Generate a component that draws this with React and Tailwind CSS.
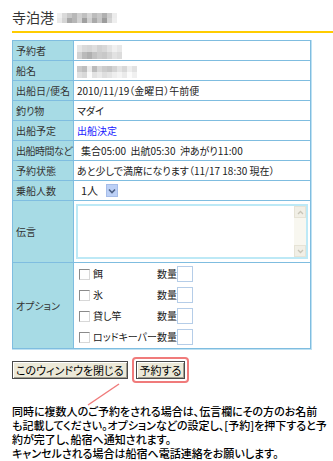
import React from "react";

const F = "font-['Noto_Sans_CJK_JP','Noto_Sans',sans-serif] [font-feature-settings:'palt']";

function Mosaic({ rows, cell }) {
  return (
    <div className="inline-flex flex-col blur-[0.6px]">
      {rows.map((r, i) => (
        <div key={i} className="flex">
          {r.map((c, j) => (
            <div key={j} className={`${cell} ${c}`} />
          ))}
        </div>
      ))}
    </div>
  );
}

const titleRows = [
  ["bg-[#f0f0f0]", "bg-[#dadada]", "bg-[#c8c8c8]", "bg-[#b8b8b8]", "bg-[#d0d0d0]", "bg-[#c0c0c0]", "bg-[#d6d6d6]", "bg-[#bcbcbc]", "bg-[#c8c8c8]", "bg-[#b0b0b0]", "bg-[#cecece]", "bg-[#ececec]"],
  ["bg-[#eaeaea]", "bg-[#d4d4d4]", "bg-[#a8a8a8]", "bg-[#b6b6b6]", "bg-[#d2d2d2]", "bg-[#a0a0a0]", "bg-[#d0d0d0]", "bg-[#aaaaaa]", "bg-[#c6c6c6]", "bg-[#9c9c9c]", "bg-[#d4d4d4]", "bg-[#eeeeee]"],
];

const r1 = [
  ["bg-[#e6e6e6]", "bg-[#dadada]", "bg-[#d6d6d6]", "bg-[#dedede]", "bg-[#d2d2d2]", "bg-[#d8d8d8]", "bg-[#e4e4e4]", "bg-[#f0f0f0]", "bg-[#e8e8e8]"],
  ["bg-[#d2d2d2]", "bg-[#bababa]", "bg-[#b0b0b0]", "bg-[#c2c2c2]", "bg-[#cccccc]", "bg-[#c8c8c8]", "bg-[#d4d4d4]", "bg-[#e2e2e2]", "bg-[#dcdcdc]"],
];

const r2 = [
  ["bg-[#cacaca]", "bg-[#bebebe]", "bg-[#ececec]", "bg-[#bcbcbc]", "bg-[#d8d8d8]", "bg-[#cccccc]", "bg-[#c6c6c6]", "bg-[#d4d4d4]", "bg-[#e4e4e4]", "bg-[#d8d8d8]", "bg-[#eeeeee]", "bg-[#e2e2e2]"],
  ["bg-[#e0e0e0]", "bg-[#d8d8d8]", "bg-[#fafafa]", "bg-[#e2e2e2]", "bg-[#eaeaea]", "bg-[#dedede]", "bg-[#e4e4e4]", "bg-[#eeeeee]", "bg-[#f4f4f4]", "bg-[#eaeaea]", "bg-[#fbfbfb]", "bg-[#f0f0f0]"],
];

const LBL = "bg-[#a7dbe5] border border-[#7fbde0] pl-[3px] text-[#333] whitespace-nowrap align-middle";
const VALB = "bg-white border border-[#7fbde0] pl-[3px] align-middle whitespace-nowrap";
const VAL = `${VALB} text-[#222]`;

function Check() {
  return (
    <span className="inline-block w-[11px] h-[11px] border border-t-[#8a8a8a] border-l-[#8a8a8a] border-r-[#d8d8d8] border-b-[#d8d8d8] bg-white mr-[3px]" />
  );
}

function OptRow({ name }) {
  return (
    <div className="flex items-center h-[21px]">
      <div className="flex items-center w-[78px] whitespace-nowrap">
        <Check />
        <span>{name}</span>
      </div>
      <span>数量</span>
      <span className="inline-block w-[16px] h-[16px] border border-[#b5cde8] bg-white" />
    </div>
  );
}

export default function App() {
  return (
    <div className={`relative w-[333px] h-[461px] bg-white ${F} text-[10px] leading-none overflow-hidden`}>
      <div className="ml-3 pt-[10px] pb-[6px] border-b-2 border-[#ffcc00] flex items-center gap-[3px]">
        <span className="text-[14px] text-[#333] leading-[15px]">寺泊港</span>
        <Mosaic rows={titleRows} cell="w-[5px] h-[5px]" />
      </div>

      <div className="ml-3 mt-[7px] w-[300px] border-r border-b border-[#bfe1f2]">
        <table className="w-[299px] border-collapse table-fixed">
          <colgroup>
            <col className="w-[61px]" />
            <col />
          </colgroup>
          <tbody>
            <tr className="h-[20px]">
              <td className={LBL}>予約者</td>
              <td className={VAL}><Mosaic rows={r1} cell="w-[5px] h-[7px]" /></td>
            </tr>
            <tr className="h-[20px]">
              <td className={LBL}>船名</td>
              <td className={VAL}><Mosaic rows={r2} cell="w-[5px] h-[6px]" /></td>
            </tr>
            <tr className="h-[20px]">
              <td className={LBL}>出船日/便名</td>
              <td className={VAL}>2010/11/19（金曜日）午前便</td>
            </tr>
            <tr className="h-[20px]">
              <td className={LBL}>釣り物</td>
              <td className={VAL}>マダイ</td>
            </tr>
            <tr className="h-[20px]">
              <td className={LBL}>出船予定</td>
              <td className={`${VALB} text-[#1a1aff]`}>出船決定</td>
            </tr>
            <tr className="h-[20px]">
              <td className={`${LBL} pl-[2px] tracking-[-0.5px]`}>出船時間など</td>
              <td className={VAL}><span className="pl-[4px]">集合05:00&nbsp;&nbsp;出航05:30&nbsp;&nbsp;沖あがり11:00</span></td>
            </tr>
            <tr className="h-[20px]">
              <td className={LBL}>予約状態</td>
              <td className={VAL}>あと少しで満席になります（11/17 18:30 現在）</td>
            </tr>
            <tr className="h-[20px]">
              <td className={LBL}>乗船人数</td>
              <td className={VAL}>
                <div className="flex items-center pl-[4px]">
                  <span className="w-[25px] text-[11px]">1人</span>
                  <span className="w-[12px] h-[13px] bg-[#bcd0f6] border border-[#a6bde9] flex items-center justify-center">
                    <svg width="8" height="6" viewBox="0 0 8 6">
                      <path d="M1 1.5 L4 4.5 L7 1.5" fill="none" stroke="#4d6185" strokeWidth="1.6" />
                    </svg>
                  </span>
                </div>
              </td>
            </tr>
            <tr className="h-[62px]">
              <td className={LBL}>伝言</td>
              <td className="bg-white border border-[#7fbde0] p-0 align-middle">
                <div className="ml-[2px] w-[232px] h-[55px] border-2 border-[#bde9f6] flex justify-end">
                  <div className="w-[12px] h-full bg-[#f8f7f0] flex flex-col justify-between">
                    <div className="h-[12px] border border-[#e6e3d6] bg-[#f1efe6] flex items-center justify-center">
                      <svg width="7" height="5" viewBox="0 0 7 5"><path d="M1 4 L3.5 1.5 L6 4" fill="none" stroke="#c8c5b8" strokeWidth="1.3" /></svg>
                    </div>
                    <div className="h-[12px] border border-[#e6e3d6] bg-[#f1efe6] flex items-center justify-center">
                      <svg width="7" height="5" viewBox="0 0 7 5"><path d="M1 1 L3.5 3.5 L6 1" fill="none" stroke="#c8c5b8" strokeWidth="1.3" /></svg>
                    </div>
                  </div>
                </div>
              </td>
            </tr>
            <tr className="h-[86px]">
              <td className={`${LBL} pl-[2px]`}>オプション</td>
              <td className={`${VAL} pl-[5px]`}>
                <div className="flex flex-col">
                  <OptRow name="餌" />
                  <OptRow name="氷" />
                  <OptRow name="貸し竿" />
                  <OptRow name="ロッドキーパー" />
                </div>
              </td>
            </tr>
          </tbody>
        </table>
      </div>

      <div className="ml-3 mt-[7px] flex items-center gap-[4px]">
        <button className="h-[18px] px-[3px] bg-[#ece9d8] border border-[#4a4a4a] shadow-[inset_1px_1px_0_#ffffff,inset_-1px_-1px_0_#a09d8f] text-[11px] text-black leading-none">
          このウィンドウを閉じる
        </button>
        <div className="border-2 border-[#f07b7b] rounded-[4px] p-[2px]">
          <button className="h-[18px] px-[3px] bg-[#ece9d8] border border-[#4a4a4a] shadow-[inset_1px_1px_0_#ffffff,inset_-1px_-1px_0_#a09d8f] text-[11px] text-black leading-none">
            予約する
          </button>
        </div>
      </div>

      <svg className="absolute left-0 top-0" width="333" height="461">
        <line x1="119" y1="384" x2="88" y2="405" stroke="#f07b7b" strokeWidth="1.5" />
      </svg>

      <p className="ml-3 mt-[21px] text-[11px] leading-[14px] text-black font-medium whitespace-nowrap">
        同時に複数人のご予約をされる場合は、伝言欄にその方のお名前<br />
        も記載してください。オプションなどの設定し、[予約]を押下すると予<br />
        約が完了し、船宿へ通知されます。<br />
        キャンセルされる場合は船宿へ電話連絡をお願いします。
      </p>
    </div>
  );
}
